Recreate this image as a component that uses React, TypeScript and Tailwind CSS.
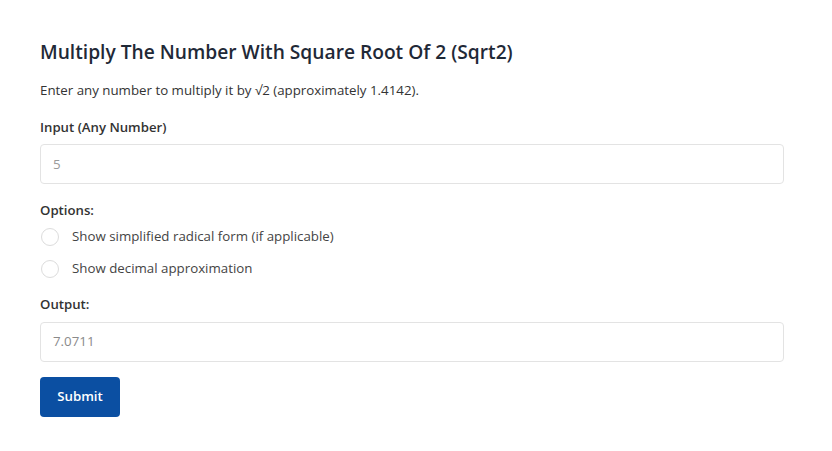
export default function App() {
  return (
    <div
      className="min-h-screen bg-white px-[40px] pt-[38px] text-[#212529]"
      style={{ fontFamily: '"Open Sans", "Noto Sans", sans-serif' }}
    >
      <div className="w-[744px]">
        <h1 className="text-[19.2px] leading-[28px] font-semibold text-[#1f2937]">
          Multiply The Number With Square Root Of 2 (Sqrt2)
        </h1>
        <p className="mt-[14px] text-[13.3px] leading-[20px] text-[#333]">
          Enter any number to multiply it by √2 (approximately 1.4142).
        </p>

        <label className="mt-[17px] block text-[13.2px] leading-[20px] font-semibold text-[#333]">
          Input (Any Number)
        </label>
        <input
          type="text"
          placeholder="5"
          className="mt-[7px] block h-[40px] w-full rounded-[4px] border border-[#e3e3e3] px-[12px] text-[13.3px] text-[#555] placeholder:text-[#9a9a9a] outline-none"
        />

        <div className="mt-[16px] text-[13.2px] leading-[20px] font-semibold text-[#333]">
          Options:
        </div>
        <div className="mt-[5px] flex flex-col gap-[8px]">
          {['Show simplified radical form (if applicable)', 'Show decimal approximation'].map((t) => (
            <label key={t} className="flex h-[24px] items-center gap-[13px] text-[13.3px] text-[#444]">
              <span className="ml-[1px] h-[18px] w-[18px] rounded-full border border-[#dcdcdc] bg-white" />
              {t}
            </label>
          ))}
        </div>

        <div className="mt-[13px] text-[13.2px] leading-[20px] font-semibold text-[#333]">
          Output:
        </div>
        <div className="mt-[8px] flex h-[40px] w-full items-center rounded-[4px] border border-[#e3e3e3] px-[12px] text-[13.3px] text-[#8a8a8a]">
          7.0711
        </div>

        <button className="mt-[15px] h-[40px] w-[80px] rounded-[4px] bg-[#0b4fa2] text-[13.3px] font-semibold text-white">
          Submit
        </button>
      </div>
    </div>
  );
}
